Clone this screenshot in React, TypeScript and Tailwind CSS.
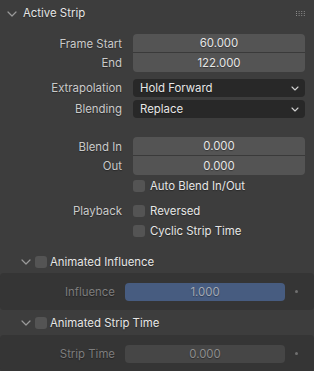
import React from "react";

const Chevron = ({ className = "" }: { className?: string }) => (
  <svg width="10" height="6" viewBox="0 0 10 6" className={className}>
    <path d="M1 1 L5 5 L9 1" fill="none" stroke="#9a9a9a" strokeWidth="1.2" strokeLinecap="round" strokeLinejoin="round" />
  </svg>
);

const SmallChevron = () => (
  <svg width="8" height="5" viewBox="0 0 8 5">
    <path d="M1 1 L4 4 L7 1" fill="none" stroke="#d0d0d0" strokeWidth="1.1" strokeLinecap="round" strokeLinejoin="round" />
  </svg>
);

const Grip = () => (
  <svg width="10" height="5" viewBox="0 0 10 5">
    {[0, 1, 2, 3].map((c) =>
      [0, 1, 2].map((r) => (
        <rect key={`${c}-${r}`} x={c * 2.6} y={r * 2} width="1" height="1" fill="#8a8a8a" />
      ))
    )}
  </svg>
);

const T = ({ children, className = "" }: { children?: React.ReactNode; className?: string }) => (
  <span className={`relative top-px ${className}`}>{children}</span>
);

const Label = ({ children, dim = false, w = "w-[122px]" }: { children?: React.ReactNode; dim?: boolean; w?: string }) => (
  <div className={`${w} shrink-0 text-right ${dim ? "text-[#7d7d7d]" : "text-[#cacaca]"}`}>
    <T>{children}</T>
  </div>
);

const Checkbox = () => <div className="w-[12px] h-[12px] rounded-[3px] bg-[#545454] shrink-0" />;

export default function App() {
  return (
    <div
      className="w-[314px] h-[371px] bg-[#3d3d3d] overflow-hidden text-[11.4px] leading-none select-none [text-shadow:0_1px_1px_rgba(0,0,0,0.35)]"
      style={{ fontFamily: "Inter, 'DejaVu Sans', sans-serif" }}
    >
      {/* Header */}
      <div className="h-[26px] flex items-center pl-[7px] pr-[8px]">
        <Chevron className="relative top-px" />
        <T className="ml-[6px] text-[#e6e6e6]">Active Strip</T>
        <div className="ml-auto">
          <Grip />
        </div>
      </div>

      {/* Frame start / End */}
      <div className="mt-[8px] flex">
        <div className="flex flex-col">
          <div className="h-[19px] flex items-center"><Label>Frame Start</Label></div>
          <div className="h-[19px] flex items-center"><Label>End</Label></div>
        </div>
        <div className="ml-[11px] w-[172px] flex flex-col rounded-[4px] overflow-hidden">
          <div className="h-[19px] bg-[#545454] border-b border-[#3a3a3a] flex items-center justify-center text-[#e6e6e6]"><T>60.000</T></div>
          <div className="h-[19px] bg-[#545454] flex items-center justify-center text-[#e6e6e6]"><T>122.000</T></div>
        </div>
      </div>

      {/* Extrapolation */}
      <div className="mt-[7px] flex items-center h-[18px]">
        <Label>Extrapolation</Label>
        <div className="ml-[11px] w-[172px] h-[18px] rounded-[4px] bg-[#282828] flex items-center pl-[7px] pr-[6px] text-[#e6e6e6]">
          <T>Hold Forward</T>
          <span className="ml-auto"><SmallChevron /></span>
        </div>
      </div>
      <div className="mt-[3px] flex items-center h-[18px]">
        <Label>Blending</Label>
        <div className="ml-[11px] w-[172px] h-[18px] rounded-[4px] bg-[#282828] flex items-center pl-[7px] pr-[6px] text-[#e6e6e6]">
          <T>Replace</T>
          <span className="ml-auto"><SmallChevron /></span>
        </div>
      </div>

      {/* Blend In / Out */}
      <div className="mt-[19px] flex">
        <div className="flex flex-col">
          <div className="h-[19px] flex items-center"><Label>Blend In</Label></div>
          <div className="h-[19px] flex items-center"><Label>Out</Label></div>
        </div>
        <div className="ml-[11px] w-[172px] flex flex-col rounded-[4px] overflow-hidden">
          <div className="h-[19px] bg-[#545454] border-b border-[#3a3a3a] flex items-center justify-center text-[#e6e6e6]"><T>0.000</T></div>
          <div className="h-[19px] bg-[#545454] flex items-center justify-center text-[#e6e6e6]"><T>0.000</T></div>
        </div>
      </div>

      {/* Auto Blend */}
      <div className="h-[20px] mt-[1px] flex items-center">
        <Label />
        <div className="ml-[11px] flex items-center gap-[5px] text-[#e6e6e6]">
          <Checkbox />
          <T>Auto Blend In/Out</T>
        </div>
      </div>

      {/* Playback */}
      <div className="h-[20px] mt-[5px] flex items-center">
        <Label>Playback</Label>
        <div className="ml-[11px] flex items-center gap-[5px] text-[#e6e6e6]">
          <Checkbox />
          <T>Reversed</T>
        </div>
      </div>
      <div className="h-[20px] flex items-center">
        <Label />
        <div className="ml-[11px] flex items-center gap-[5px] text-[#e6e6e6]">
          <Checkbox />
          <T>Cyclic Strip Time</T>
        </div>
      </div>

      {/* Animated Influence header */}
      <div className="mt-[7px] h-[25px] flex items-center pl-[21px] pt-[3px]">
        <Chevron />
        <div className="ml-[4px]"><Checkbox /></div>
        <T className="ml-[3px] text-[#e6e6e6]">Animated Influence</T>
      </div>
      <div className="h-[37px] bg-[#353535] rounded-[4px] flex items-center">
        <Label dim w="w-[115px]">Influence</Label>
        <div className="ml-[10px] w-[160px] h-[18px] rounded-[4px] bg-[#475c80] flex items-center justify-center text-[#a3a9b3]"><T>1.000</T></div>
        <div className="ml-[10px] w-[3px] h-[3px] rounded-full bg-[#707070]" />
      </div>

      {/* Animated Strip Time header */}
      <div className="h-[25px] flex items-center pl-[21px]">
        <Chevron />
        <div className="ml-[4px]"><Checkbox /></div>
        <T className="ml-[3px] text-[#e6e6e6]">Animated Strip Time</T>
      </div>
      <div className="h-[37px] bg-[#353535] rounded-[4px] flex items-center">
        <Label dim w="w-[115px]">Strip Time</Label>
        <div className="ml-[10px] w-[160px] h-[18px] rounded-[4px] bg-[#464646] flex items-center justify-center text-[#8c8c8c]"><T>0.000</T></div>
        <div className="ml-[10px] w-[3px] h-[3px] rounded-full bg-[#707070]" />
      </div>
    </div>
  );
}
